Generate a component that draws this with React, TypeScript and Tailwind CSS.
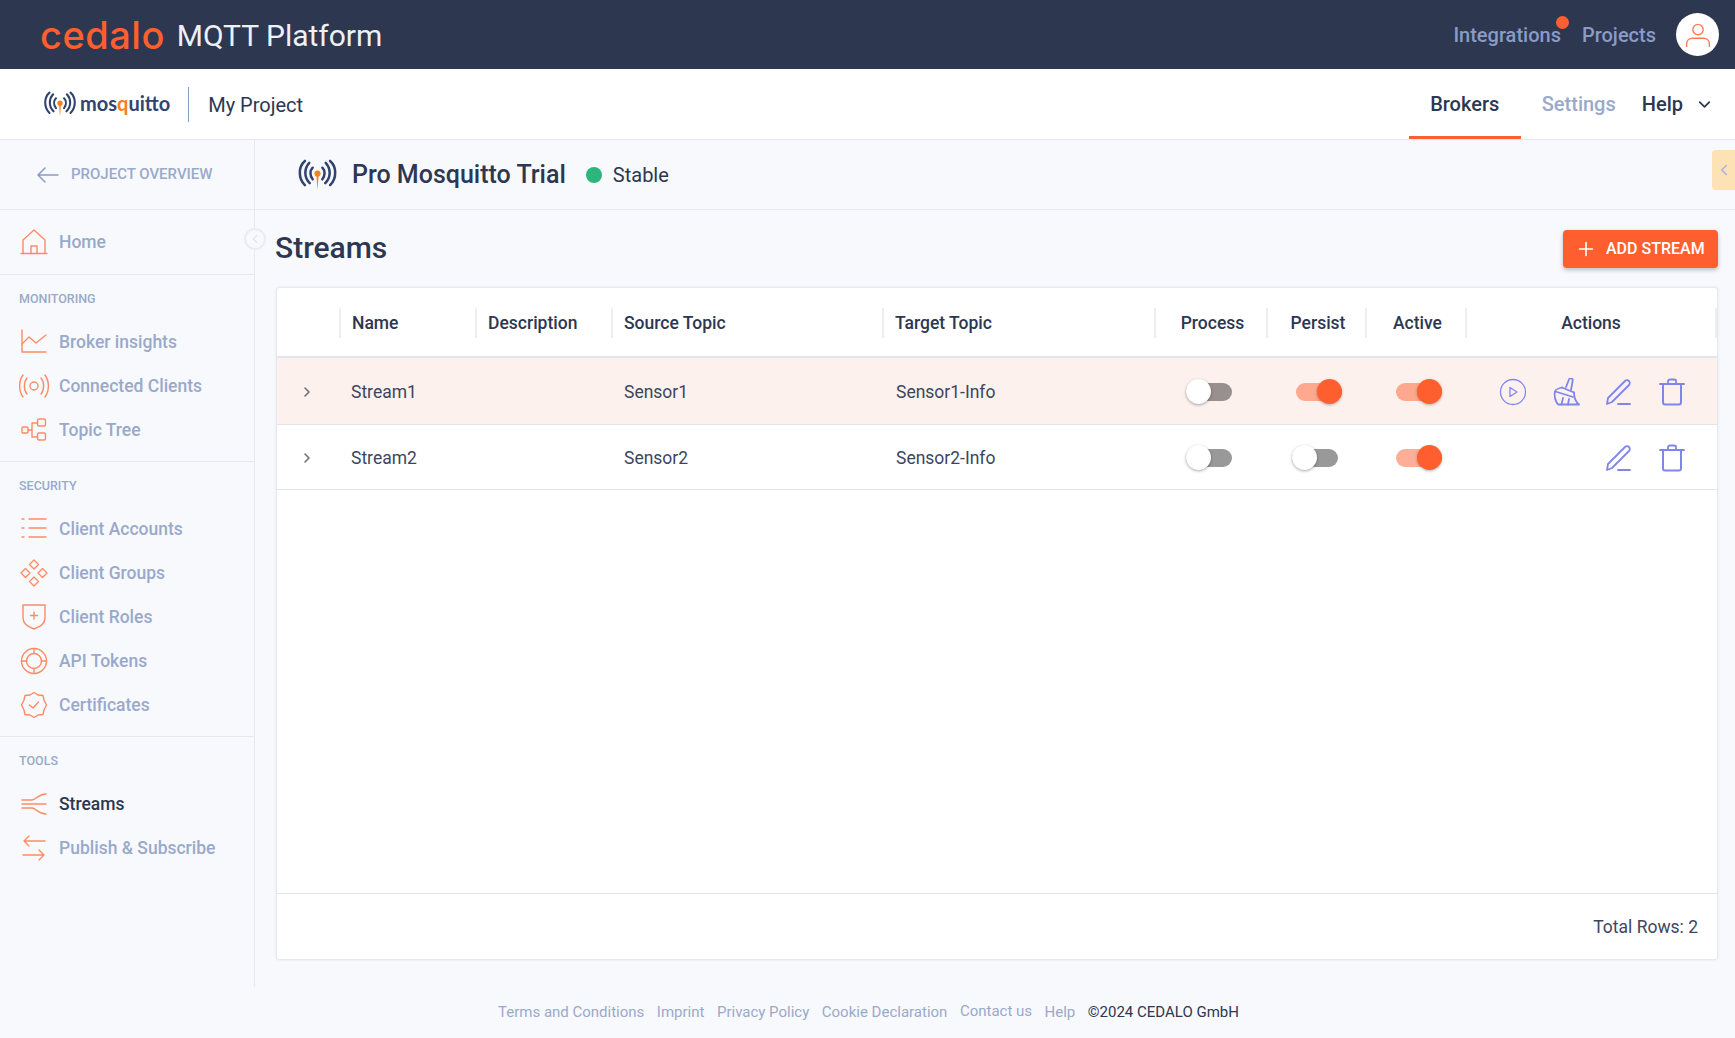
import React from 'react';
import { ChevronDown, ChevronLeft, ChevronRight, Plus } from 'lucide-react';

const SignalLogo = ({ className }: { className: string }) => (
    <svg viewBox="0 0 42 32" className={className} fill="none" strokeLinecap="round">
        <g stroke="#31436f" strokeWidth="2.600">
            <path d="M8 2C1 8 1 20 8 27" />
            <path d="M12.500 4C7 10 7 19 13 25" />
            <path d="M16 9C13 12 13 17 16 21" />
            <path d="M34 2C41 8 41 20 34 27" />
            <path d="M29.500 4C35 10 35 19 29 25" />
            <path d="M26 9C29 12 29 17 26 21" />
        </g>
        <circle cx="21" cy="15" r="3.200" fill="#f58220" />
        <path d="M19.800 16L21 32L22.200 16Z" fill="#f58220" />
    </svg>
);

const navIcons: Record<string, React.ReactNode> = {
    home: (
        <>
            <path d="M1 25.500H27" />
            <path d="M3 25V12L14 2L25 12V25" />
            <path d="M11 25V18H17V25" />
        </>
    ),
    chart: (
        <>
            <path d="M2 2V24H26" />
            <path d="M2 16L9 9L16 15L26 7" />
        </>
    ),
    radio: (
        <>
            <circle cx="14" cy="14" r="4" />
            <path d="M7 6C3.500 10 3.500 18 7 22" />
            <path d="M21 6C24.500 10 24.500 18 21 22" />
            <path d="M3 3C-1.500 9 -1.500 19 3 25" />
            <path d="M25 3C29.500 9 29.500 19 25 25" />
        </>
    ),
    tree: (
        <>
            <rect x="2" y="11" width="6" height="6" rx="1" />
            <rect x="17.500" y="3" width="8" height="7" rx="1.500" />
            <rect x="17.500" y="17" width="8" height="7" rx="1.500" />
            <path d="M8 14H12M12 7V21M12 7H17.500M12 21H17.500" />
        </>
    ),
    list: <path d="M2 4H4M9 4H26M2 13H4M9 13H26M2 22H4M9 22H26" />,
    groups: (
        <>
            <path d="M14 1L18.500 5.500L14 10L9.500 5.500Z" />
            <path d="M14 18L18.500 22.500L14 27L9.500 22.500Z" />
            <path d="M5.500 9.500L10 14L5.500 18.500L1 14Z" />
            <path d="M22.500 9.500L27 14L22.500 18.500L18 14Z" />
        </>
    ),
    shield: (
        <>
            <path d="M3 2H25V15C25 20 20 24 14 26C8 24 3 20 3 15Z" />
            <path d="M14 9V16M10.500 12.500H17.500" />
        </>
    ),
    lifebuoy: (
        <>
            <circle cx="14" cy="14" r="12.500" />
            <circle cx="14" cy="14" r="7.500" />
            <path d="M14 1.500V6.500M14 21.500V26.500M1.500 14H6.500M21.500 14H26.500" />
        </>
    ),
    badge: (
        <>
            <path d="M14 1.500L18 4L23 4.500L24 9L26.500 14L24 19L23 23.500L18 24L14 26.500L10 24L5 23.500L4 19L1.500 14L4 9L5 4.500L10 4Z" />
            <path d="M9.500 14L13 17L18.500 11" />
        </>
    ),
    streams: (
        <>
            <path d="M2 10H12C16 10 18 4 26 4" />
            <path d="M2 14H26" />
            <path d="M2 18H12C16 18 18 24 26 24" />
        </>
    ),
    swap: (
        <>
            <path d="M4 7H25M4 7L9 2M4 7L9 12" />
            <path d="M3 21H24M24 21L19 16M24 21L19 26" />
        </>
    ),
};

const NavIcon = ({ name }: { name: string }) => (
    <svg viewBox="0 0 28 28" className="w-[28px] h-[28px] shrink-0 overflow-visible" fill="none" stroke="#ff8a66" strokeWidth="1.400" strokeLinecap="round" strokeLinejoin="round">
        {navIcons[name]}
    </svg>
);

const NavItem = ({ icon, label, active }: { icon: string; label: string; active?: boolean }) => (
    <div className="h-[44px] flex items-center pl-[20px] gap-[11px]">
        <NavIcon name={icon} />
        <span className={active ? 'text-[17.500px] font-medium text-[#2d3750]' : 'text-[17.500px] font-medium text-[#9aa9ca]'}>{label}</span>
    </div>
);

const NavSection = ({ title, children }: { title: string; children: React.ReactNode }) => (
    <div className="border-t border-[#e6e9f0] pt-[14px] pb-[9px]">
        <div className="pl-[19px] h-[20px] flex items-center text-[12.500px] font-medium text-[#9aa9ca] mb-[11px]">{title}</div>
        {children}
    </div>
);

const Toggle = ({ on }: { on?: boolean }) => (
    <div className={on ? 'relative w-[46px] h-[18px] rounded-full bg-[#ff5f2e]/50' : 'relative w-[46px] h-[18px] rounded-full bg-black/40'}>
        <div
            className={
                on
                    ? 'absolute right-0 top-[-4px] w-[25px] h-[25px] rounded-full bg-[#ff5f2e] shadow-[0_1px_3px_rgba(0,0,0,0.3)]'
                    : 'absolute left-0 top-[-4px] w-[25px] h-[25px] rounded-full bg-white shadow-[0_1px_3px_rgba(0,0,0,0.35)]'
            }
        />
    </div>
);

const ActionIcon = ({ children }: { children: React.ReactNode }) => (
    <svg viewBox="0 0 28 28" className="w-[28px] h-[28px]" fill="none" stroke="#7f86ea" strokeWidth="1.800" strokeLinecap="round" strokeLinejoin="round">
        {children}
    </svg>
);

const PlayIcon = () => (
    <ActionIcon>
        <circle cx="14" cy="14" r="12.500" strokeWidth="1.300" />
        <path d="M11 9.500L18 14L11 18.500Z" strokeWidth="1.300" />
    </ActionIcon>
);

const BroomIcon = () => (
    <ActionIcon>
        <path d="M14 9L17 1.500C17.700 -0.500 21 0 20.700 2.500L19 12" />
        <path d="M10 9.500L22 14.500" />
        <path d="M10 9.500C6 10.500 3 12 3 13.500C2 17 3 23 6 26.500H27C24 24 22 19 22 14.500" />
        <path d="M3.500 13.500L21 19" />
        <path d="M11 20L9.500 26.500M17 21L16 26.500" />
    </ActionIcon>
);

const PencilIcon = () => (
    <ActionIcon>
        <path d="M3 20L20 3C21 2 23 2 24 3C25 4 25 6 24 7L7 24L2 26Z" />
        <path d="M13 26H25" />
    </ActionIcon>
);

const TrashIcon = () => (
    <ActionIcon>
        <path d="M2 6H26" />
        <path d="M10 6V3C10 2 11 1.500 12 1.500H16C17 1.500 18 2 18 3V6" />
        <path d="M5 6V24C5 25.500 6 26.500 7 26.500H21C22 26.500 23 25.500 23 24V6" strokeWidth="2" />
    </ActionIcon>
);

const gridCols = 'grid grid-cols-[62px_136px_136px_271px_272px_112px_99px_100px_1fr]';

const HeaderCell = ({ label, center, last }: { label?: string; center?: boolean; last?: boolean }) => (
    <div
        className={
            (center ? 'justify-center ' : 'pl-[11px] ') +
            (last ? 'border-r-2 ' : center ? 'pl-[3px] ' : '') +
            'h-[30px] flex items-center border-l-2 border-[#eeeeee] text-[17.500px] font-medium text-[#2d3750]'
        }
    >
        {label}
    </div>
);

const StreamRow = ({ name, source, target, persist, highlighted }: { name: string; source: string; target: string; persist: boolean; highlighted?: boolean }) => (
    <div className={(highlighted ? 'bg-[#fdf1ee] h-[67px] ' : 'h-[65px] ') + gridCols + ' items-center border-b border-[#e3e5ea] text-[17.500px] text-[#3c465f]'}>
        <div className="pl-[22px] pt-[2px]">
            <ChevronRight className="w-[16px] h-[16px] text-[#6f6f6f]" strokeWidth={2.400} />
        </div>
        <div className="pl-[12px] pt-[2px]">{name}</div>
        <div />
        <div className="pl-[13px] pt-[2px]">{source}</div>
        <div className="pl-[14px] pt-[2px]">{target}</div>
        <div className="pl-[32px] pt-[2px]">
            <Toggle />
        </div>
        <div className={(persist ? 'pl-[30px]' : 'pl-[26px]') + ' pt-[2px]'}>
            <Toggle on={persist} />
        </div>
        <div className="pl-[31px] pt-[2px]">
            <Toggle on />
        </div>
        <div className="flex items-center pl-[34px] gap-[25px] pt-[1px]">
            {highlighted ? <PlayIcon /> : <div className="w-[28px] h-[28px]" />}
            {highlighted ? <BroomIcon /> : <div className="w-[28px] h-[28px]" />}
            <PencilIcon />
            <TrashIcon />
        </div>
    </div>
);

export default function App() {
    return (
        <div className="w-[1735px] h-[1038px] relative overflow-hidden bg-[#f7f9fd] font-['Roboto',sans-serif] flex flex-col">
            {/* top bar */}
            <header className="h-[69px] shrink-0 bg-[#2d3750] flex items-center pl-[40px] pr-[16px]">
                <span className="font-['Inter',sans-serif] text-[38px] font-medium tracking-[0.500px] leading-none text-[#ff5f2e]">cedalo</span>
                <span className="ml-[12px] text-[30px] text-[#edf0f6] pt-[2px]">MQTT Platform</span>
                <div className="ml-auto flex items-center">
                    <div className="relative text-[20px] font-medium text-[#8a9bc6]">
                        Integrations
                        <div className="absolute right-[-8px] top-[-4px] w-[13px] h-[13px] rounded-full bg-[#ff5f2e]" />
                    </div>
                    <div className="ml-[21px] text-[20px] font-medium text-[#8a9bc6]">Projects</div>
                    <div className="ml-[20px] w-[43px] h-[43px] rounded-full bg-white flex items-center justify-center">
                        <svg viewBox="0 0 24 24" className="w-[26px] h-[26px]" fill="none" stroke="#ff7a55" strokeWidth="1.300">
                            <circle cx="12" cy="7" r="4.800" />
                            <path d="M1.500 23V20C1.500 17 4 15 7 15H17C20 15 22.500 17 22.500 20V23" />
                        </svg>
                    </div>
                </div>
            </header>

            {/* sub bar */}
            <div className="h-[71px] shrink-0 bg-white border-b border-[#e6e9f0] flex items-center pl-[43px] pr-[21px]">
                <SignalLogo className="w-[34px] h-[26px]" />
                <span className="ml-[3px] font-['Lato',sans-serif] text-[20px] font-bold leading-none text-[#31436f] pb-[2px]">
                    mos<span className="text-[#f58220]">q</span>uitto
                </span>
                <div className="ml-[18px] w-px h-[35px] bg-[#8a9bc6]" />
                <span className="ml-[19px] text-[20px] text-[#2d3750] pt-[2px]">My Project</span>
                <div className="ml-auto flex items-stretch h-full">
                    <div className="w-[112px] pt-[2px] flex items-center justify-center border-b-[3px] border-[#ff5f2e] text-[20px] font-medium text-[#2d3750]">Brokers</div>
                    <div className="ml-[21px] flex items-center text-[20px] font-medium text-[#9aa9ca]">Settings</div>
                    <div className="ml-[26px] flex items-center text-[20px] font-medium text-[#2d3750]">Help</div>
                    <div className="ml-[12px] flex items-center">
                        <ChevronDown className="w-[19px] h-[19px] text-[#2d3750]" strokeWidth={2.200} />
                    </div>
                </div>
            </div>

            <div className="h-[847px] flex">
                {/* sidebar */}
                <aside className="w-[255px] shrink-0 border-r border-[#e6e9f0]">
                    <div className="h-[70px] border-b border-[#e6e9f0] flex items-center pl-[37px] gap-[12px]">
                        <svg viewBox="0 0 22 16" className="w-[22px] h-[16px]" fill="none" stroke="#8a9bc6" strokeWidth="1.500" strokeLinecap="round" strokeLinejoin="round">
                            <path d="M21 8H1M8 1L1 8L8 15" />
                        </svg>
                        <span className="text-[15px] font-medium text-[#9aa9ca]">PROJECT OVERVIEW</span>
                    </div>
                    <div className="h-[64px] flex items-center">
                        <NavItem icon="home" label="Home" />
                    </div>
                    <NavSection title="MONITORING">
                        <NavItem icon="chart" label="Broker insights" />
                        <NavItem icon="radio" label="Connected Clients" />
                        <NavItem icon="tree" label="Topic Tree" />
                    </NavSection>
                    <NavSection title="SECURITY">
                        <NavItem icon="list" label="Client Accounts" />
                        <NavItem icon="groups" label="Client Groups" />
                        <NavItem icon="shield" label="Client Roles" />
                        <NavItem icon="lifebuoy" label="API Tokens" />
                        <NavItem icon="badge" label="Certificates" />
                    </NavSection>
                    <NavSection title="TOOLS">
                        <NavItem icon="streams" label="Streams" active />
                        <NavItem icon="swap" label="Publish & Subscribe" />
                    </NavSection>
                </aside>

                {/* main */}
                <main className="flex-1 min-w-0 flex flex-col">
                    <div className="h-[70px] shrink-0 border-b border-[#e6e9f0] flex items-center pl-[42px]">
                        <SignalLogo className="w-[41px] h-[31px]" />
                        <span className="ml-[14px] text-[25px] font-medium text-[#2d3750]">Pro Mosquitto Trial</span>
                        <div className="ml-[20px] w-[16px] h-[16px] rounded-full bg-[#2cb67d]" />
                        <span className="ml-[11px] text-[20px] text-[#2d3750]">Stable</span>
                    </div>

                    <div className="flex-1 min-h-0 flex flex-col pl-[21px] pr-[17px] pb-[27px]">
                        <div className="h-[77px] shrink-0 flex items-center justify-between">
                            <h1 className="-ml-px pb-[2px] text-[30px] font-medium text-[#2d3750]">Streams</h1>
                            <button className="w-[155px] h-[38px] mt-[1px] rounded-[4px] bg-[#ff5f2e] text-white flex items-center pl-[12px] gap-[9px] shadow-[0_2px_4px_rgba(0,0,0,0.25)]">
                                <Plus className="w-[22px] h-[22px]" strokeWidth={1.800} />
                                <span className="text-[16px] font-medium">ADD STREAM</span>
                            </button>
                        </div>

                        {/* table */}
                        <div className="flex-1 min-h-0 flex flex-col bg-white rounded-[3px] border border-[#e6e9f0] shadow-[0_0_3px_rgba(0,0,0,0.08)]">
                            <div className={gridCols + ' h-[70px] shrink-0 items-center pt-[2px] border-b-2 border-[#e2e5ea]'}>
                                <div />
                                <HeaderCell label="Name" />
                                <HeaderCell label="Description" />
                                <HeaderCell label="Source Topic" />
                                <HeaderCell label="Target Topic" />
                                <HeaderCell label="Process" center />
                                <HeaderCell label="Persist" center />
                                <HeaderCell label="Active" center />
                                <HeaderCell label="Actions" center last />
                            </div>
                            <StreamRow name="Stream1" source="Sensor1" target="Sensor1-Info" persist highlighted />
                            <StreamRow name="Stream2" source="Sensor2" target="Sensor2-Info" persist={false} />
                            <div className="flex-1" />
                            <div className="h-[66px] shrink-0 pt-[2px] border-t border-[#e3e5ea] flex items-center justify-end pr-[19px] text-[17.500px] text-[#3c465f]">Total Rows: 2</div>
                        </div>
                    </div>
                </main>
            </div>

            {/* footer */}
            <footer className="flex-1 flex items-center pl-[498px] gap-[12.500px] text-[15px] text-[#9aa9ca]">
                <span>Terms and Conditions</span>
                <span>Imprint</span>
                <span>Privacy Policy</span>
                <span>Cookie Declaration</span>
                <span className="-translate-y-px">Contact us</span>
                <span>Help</span>
                <span className="text-[#2d3750]">©2024 CEDALO GmbH</span>
            </footer>

            {/* sidebar collapse */}
            <div className="absolute left-[244px] top-[228px] w-[22px] h-[22px] rounded-full border-2 border-[#e9ecf3] bg-[#f7f9fd] flex items-center justify-center">
                <ChevronLeft className="w-[14px] h-[14px] text-[#dfe3ec]" strokeWidth={2} />
            </div>
            {/* right drawer tab */}
            <div className="absolute right-0 top-[150px] w-[23px] h-[40px] rounded-l-[4px] bg-[#fde2b5] flex items-center justify-center">
                <ChevronLeft className="w-[18px] h-[18px] text-[#a9b4e6]" strokeWidth={2.200} />
            </div>
        </div>
    );
}
